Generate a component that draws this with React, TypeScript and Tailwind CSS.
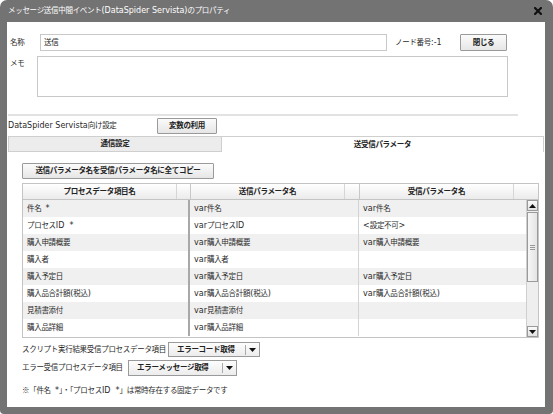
import React from "react";

function T({ s }: { s: string }) {
  const parts = s.split(/([\x21-\x7e](?:[\x20-\x7e]*[\x21-\x7e])?)/);
  return (
    <>
      {parts.map((p, i) =>
        i % 2 === 1 ? (
          <span key={i} className="text-[8px] tracking-normal">
            {p}
          </span>
        ) : (
          <React.Fragment key={i}>{p}</React.Fragment>
        )
      )}
    </>
  );
}

const rows: [string, string, string][] = [
  ["件名  *", "var件名", "var件名"],
  ["プロセスID  *", "varプロセスID", "<設定不可>"],
  ["購入申請概要", "var購入申請概要", "var購入申請概要"],
  ["購入者", "var購入者", ""],
  ["購入予定日", "var購入予定日", "var購入予定日"],
  ["購入品合計額(税込)", "var購入品合計額(税込)", "var購入品合計額(税込)"],
  ["見積書添付", "var見積書添付", ""],
  ["購入品詳細", "var購入品詳細", ""],
];

function Btn({ w, children }: { w: string; children: React.ReactNode }) {
  return (
    <div
      className={`${w} h-full shrink-0 flex items-center justify-center border border-[#9a9a9a] bg-gradient-to-b from-[#fbfbfb] to-[#e6e6e6] font-bold text-[#222] rounded-[1px] whitespace-nowrap`}
    >
      {children}
    </div>
  );
}

function Tri({ up }: { up?: boolean }) {
  return (
    <svg width="7" height="4" viewBox="0 0 7 4">
      {up ? <polygon points="0,4 7,4 3.5,0" fill="#111" /> : <polygon points="0,0 7,0 3.5,4" fill="#111" />}
    </svg>
  );
}

function Dropdown({ w, label }: { w: string; label: string }) {
  return (
    <div className={`${w} h-full shrink-0 flex items-center border border-[#9a9a9a] bg-gradient-to-b from-[#fdfdfd] to-[#ececec]`}>
      <div className="flex-1 pl-[8px] font-bold text-[#222] whitespace-nowrap">{label}</div>
      <div className="h-[10px] w-px bg-[#aaa]" />
      <div className="w-[13px] flex items-center justify-center">
        <Tri />
      </div>
    </div>
  );
}

export default function App() {
  return (
    <div className="w-[553px] h-[414px] bg-white text-[7.5px] tracking-[-0.3px] leading-[10px] text-[#2a2a2a] [font-family:'DejaVu_Sans','Noto_Sans_CJK_JP',sans-serif]">
      <div className="w-full h-full bg-[#737373] rounded-t-[7px] rounded-b-[4px] flex flex-col">
        <div className="h-[22px] shrink-0 flex items-center justify-between pl-[8px] pr-[11px] text-white whitespace-nowrap">
          <span>
            <T s="メッセージ送信中間イベント(DataSpider Servista)のプロパティ" />
          </span>
          <svg width="8" height="8" viewBox="0 0 8 8">
            <path d="M1 1 L7 7 M7 1 L1 7" stroke="#111" strokeWidth="2.2" strokeLinecap="square" />
          </svg>
        </div>
        <div className="ml-[7px] mr-[8px] mb-[7px] flex-1 bg-white flex flex-col">
          {/* name row */}
          <div className="mt-[12px] h-[17px] flex items-center">
            <div className="w-[33px] pl-[3px]">名称</div>
            <div className="w-[347px] h-full border border-[#c8c8c8] flex items-center pl-[3px] text-[#222]">送信</div>
            <div className="w-[73px] pl-[8px] whitespace-nowrap">
              <T s="ノード番号:-1" />
            </div>
            <Btn w="w-[47px]">閉じる</Btn>
          </div>
          {/* memo row */}
          <div className="mt-[5px] h-[41px] flex items-start">
            <div className="w-[30px] pl-[3px] pt-[3px]">メモ</div>
            <div className="w-[471px] h-full border border-[#c8c8c8]" />
          </div>
          <div className="mt-[17px] ml-[1px] w-[510px] h-[2px] bg-[#e2e2e2]" />
          {/* DataSpider row */}
          <div className="mt-[2px] h-[16px] flex items-center">
            <div className="w-[150px] pl-[1px] whitespace-nowrap">
              <T s="DataSpider Servista向け設定" />
            </div>
            <Btn w="w-[60px]">変数の利用</Btn>
          </div>
          {/* tabs */}
          <div className="mt-[2px] h-[16px] flex">
            <div className="ml-[1px] w-[214px] h-full bg-[#ececec] border border-[#cfcfcf] flex items-center justify-center font-bold text-[#222]">
              通信設定
            </div>
            <div className="w-[322px] h-full border-t border-r border-[#cfcfcf] flex items-center justify-center font-bold text-[#222]">
              送受信パラメータ
            </div>
          </div>
          {/* copy button */}
          <div className="mt-[11px] ml-[15px] h-[16px] flex">
            <Btn w="w-[192px]">送信パラメータ名を受信パラメータ名に全てコピー</Btn>
          </div>
          {/* table */}
          <div className="mt-[4px] ml-[15px] w-[517px] h-[155px] border border-[#c4c4c4] flex flex-col">
            <div className="h-[16px] shrink-0 grid grid-cols-[154px_14px_154px_15px_154px_24px] bg-gradient-to-b from-[#ffffff] to-[#ebebeb] border-b border-[#c4c4c4] font-bold text-[#222]">
              <div className="flex items-center justify-center border-r border-[#d6d6d6]">プロセスデータ項目名</div>
              <div className="border-r border-[#c8c8c8]" />
              <div className="flex items-center justify-center border-r border-[#d6d6d6]">送信パラメータ名</div>
              <div className="border-r border-[#c8c8c8]" />
              <div className="flex items-center justify-center border-r border-[#d6d6d6]">受信パラメータ名</div>
              <div />
            </div>
            <div className="flex-1 flex">
              <div className="w-[503px] flex flex-col">
                {rows.map((r, i) => (
                  <div
                    key={i}
                    className={`h-[17px] grid grid-cols-[167px_169px_167px] whitespace-pre ${i % 2 === 0 ? "bg-[#f0f0f0]" : "bg-white"}`}
                  >
                    <div className="flex items-center pl-[4px] border-r-2 border-[#a8a8a8]">
                      <T s={r[0]} />
                    </div>
                    <div className="flex items-center pl-[4px] border-r border-[#d4d4d4]">
                      <T s={r[1]} />
                    </div>
                    <div className="flex items-center pl-[4px]">
                      <T s={r[2]} />
                    </div>
                  </div>
                ))}
              </div>
              {/* scrollbar */}
              <div className="w-[12px] flex flex-col bg-[#eeeeee] border-l border-[#cfcfcf]">
                <div className="h-[11px] flex items-center justify-center border border-[#9a9a9a] bg-gradient-to-b from-[#fafafa] to-[#e2e2e2]">
                  <Tri up />
                </div>
                <div className="flex-1 flex flex-col">
                  <div className="h-[70px] mt-px border border-[#9a9a9a] bg-gradient-to-r from-[#f6f6f6] to-[#e4e4e4] flex flex-col items-center justify-center gap-[1px]">
                    <div className="w-[5px] h-px bg-[#999]" />
                    <div className="w-[5px] h-px bg-[#999]" />
                    <div className="w-[5px] h-px bg-[#999]" />
                  </div>
                </div>
                <div className="h-[11px] flex items-center justify-center border border-[#9a9a9a] bg-gradient-to-b from-[#fafafa] to-[#e2e2e2]">
                  <Tri />
                </div>
              </div>
            </div>
          </div>
          {/* dropdown rows */}
          <div className="mt-[4px] ml-[15px] h-[15px] flex items-center">
            <div className="w-[146px] whitespace-nowrap">スクリプト実行結果受信プロセスデータ項目</div>
            <Dropdown w="w-[92px]" label="エラーコード取得" />
          </div>
          <div className="mt-[3px] ml-[15px] h-[16px] flex items-center">
            <div className="w-[106px] whitespace-nowrap">エラー受信プロセスデータ項目</div>
            <Dropdown w="w-[109px]" label="エラーメッセージ取得" />
          </div>
          <div className="mt-[9px] ml-[15px] whitespace-pre">
            <span className="[font-family:'Noto_Sans_CJK_JP',sans-serif]">※</span>
            <T s="「件名  *」・「プロセスID  *」は常時存在する固定データです" />
          </div>
        </div>
      </div>
    </div>
  );
}
